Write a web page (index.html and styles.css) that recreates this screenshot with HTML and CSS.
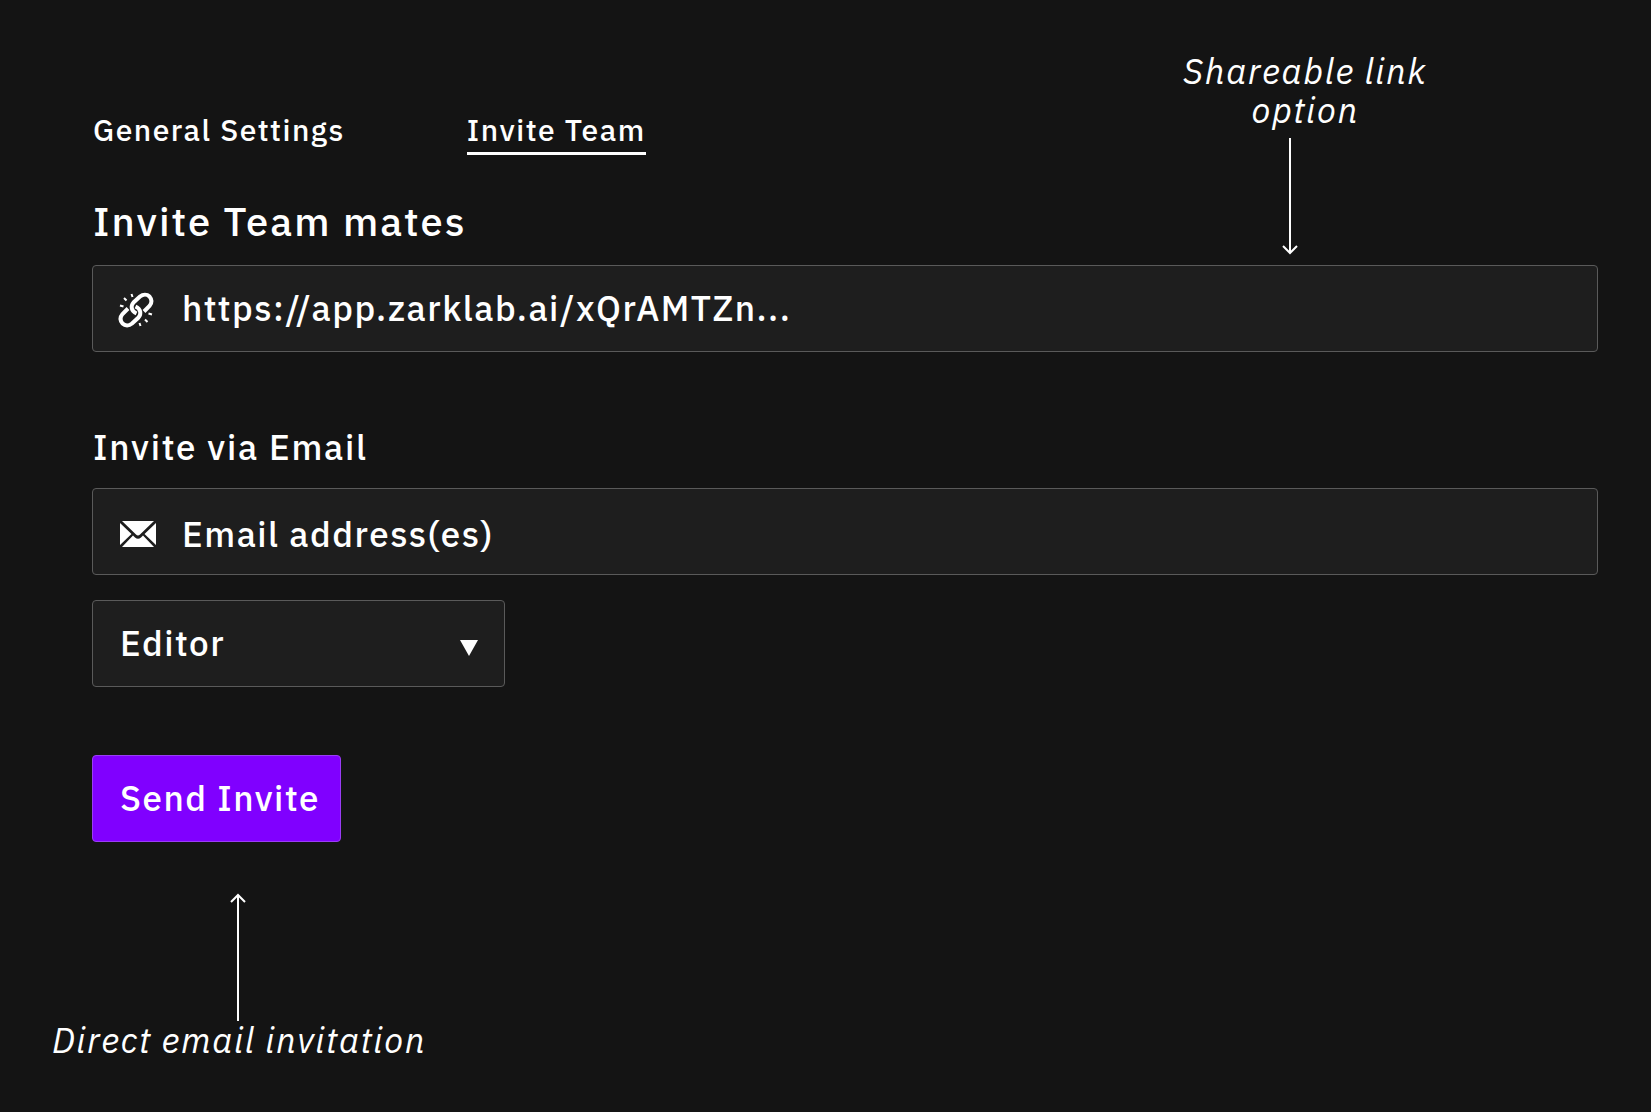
FILE: index.html
```html
<!DOCTYPE html>
<html lang="en">
<head>
<meta charset="utf-8">
<meta name="viewport" content="width=device-width, initial-scale=1">
<title>Invite Team</title>
<link rel="stylesheet" href="styles.css">
</head>
<body>
<main class="page">
  <nav class="tabs" aria-label="Settings">
    <a class="tab" href="#general">General Settings</a>
    <a class="tab tab-active" href="#invite" aria-current="page">Invite Team</a>
  </nav>

  <section class="share">
    <h1 class="title"><label for="link">Invite Team mates</label></h1>
    <div class="field">
      <svg class="icon" viewBox="0 0 36 36" aria-hidden="true">
        <g fill="none" stroke="currentColor" stroke-width="4">
          <path d="M16.500 23.500C11 21 10.500 16 13.500 12.500L20 6.500C23 4 27 4 29.500 6.500C32 9.500 32 13 29.500 16L24 21.500"/>
          <path d="M15.500 16.500C21 19 21.500 24 18.500 27.500L12 33.500C9 36 5 36 2.500 33.500C0 30.500 0 27 2.500 24L8 18.500"/>
        </g>
        <g stroke="currentColor" stroke-width="2">
          <path d="M11.500 4l1 3M4 8l2.500 2.500M0 15.500l3.500 1M28.500 23.500l3.500 1M25 29.500l2.500 2.500M19.500 33l1 3"/>
        </g>
      </svg>
      <input class="input" id="link" type="text" readonly value="https://app.zarklab.ai/xQrAMTZn...">
    </div>
    <div class="note note-link">
      <p class="note-text">Shareable link option</p>
      <svg class="arrow arrow-down" viewBox="0 0 16 118" aria-hidden="true"><path d="M8 1V115M1 109l7 7 7-7"/></svg>
    </div>
  </section>

  <form class="invite">
    <h2 class="subtitle"><label for="email">Invite via Email</label></h2>
    <div class="field field-email">
      <svg class="icon" viewBox="0 0 36 36" aria-hidden="true">
        <path fill="currentColor" d="M2 5H34L20 18.500Q18 20.500 16 18.500ZM0 7L11.500 18L0 29ZM36 7V29L24.500 18ZM2 31L13 19.500L15 21.500Q18 24 21 21.500L23 19.500L34 31Z"/>
      </svg>
      <input class="input" id="email" type="text" placeholder="Email address(es)">
    </div>
    <div class="field role">
      <select class="input" aria-label="Role">
        <option>Editor</option>
      </select>
      <svg class="caret" viewBox="0 0 18 26" aria-hidden="true"><path fill="currentColor" d="M0 10H18L9 26Z"/></svg>
    </div>
    <button class="send" type="submit">Send Invite</button>
  </form>

  <div class="note note-email">
    <svg class="arrow arrow-up" viewBox="0 0 16 128" aria-hidden="true"><path d="M8 128V3M1 9l7-7 7 7"/></svg>
    <p class="note-text">Direct email invitation</p>
  </div>
</main>
</body>
</html>
```
FILE: styles.css
```css
* {
  box-sizing: border-box;
}

body {
  margin: 0;
  background: #141414;
  color: #fff;
  font-family: "IBM Plex Sans", "Noto Sans", sans-serif;
  font-size: 30px;
  font-weight: 500;
  letter-spacing: 0.05em;
}

h1, h2, p {
  margin: 0;
}

.page {
  padding: 110px 53px 32px 92px;
}

.tabs {
  display: flex;
  gap: 122px;
  padding-left: 1px;
}

.tab {
  padding-bottom: 2px;
  border-bottom: 3px solid transparent;
  color: inherit;
  line-height: 40px;
  text-decoration: none;
}

.tab-active {
  border-color: #fff;
}

.share {
  position: relative;
  margin-top: 40px;
}

.title,
.subtitle {
  padding-left: 1px;
  font-weight: 500;
  letter-spacing: 0.05em;
}

.title {
  margin-bottom: 18px;
  font-size: 40px;
  line-height: 52px;
}

.subtitle {
  margin-bottom: 17px;
  font-size: 35px;
  line-height: 48px;
}

.field {
  display: flex;
  align-items: center;
  gap: 26px;
  height: 87px;
  padding: 0 28px 1px 27px;
  background: #1e1e1e;
  border: 1px solid #5a5a5a;
  border-radius: 4px;
}

.field-email {
  padding-top: 4px;
  padding-bottom: 0;
}

.icon {
  flex: none;
  width: 36px;
  height: 36px;
  overflow: visible;
}

.input {
  flex: 1;
  min-width: 0;
  height: 100%;
  padding: 0;
  appearance: none;
  background: none;
  border: 0;
  outline: 0;
  color: inherit;
  font: inherit;
  font-size: 35px;
  letter-spacing: inherit;
}

.input::placeholder {
  color: inherit;
  opacity: 1;
}

.invite {
  margin-top: 71px;
}

.role {
  width: 413px;
  max-width: 100%;
  margin-top: 25px;
  padding-right: 26px;
}

.caret {
  width: 18px;
  height: 26px;
  pointer-events: none;
}

.send {
  display: block;
  height: 87px;
  min-width: 248px;
  margin-top: 68px;
  padding: 0 20px 1px 27px;
  background: #8000ff;
  border: 1px solid #9a3df5;
  border-radius: 4px;
  color: inherit;
  font: inherit;
  font-size: 35px;
  letter-spacing: inherit;
  text-align: left;
}

.note {
  display: flex;
  flex-direction: column;
  width: max-content;
  font-weight: 400;
  font-style: italic;
}

.note-text {
  font-size: 35px;
  line-height: 39px;
}

.arrow {
  width: 16px;
  fill: none;
  stroke: currentColor;
  stroke-width: 2;
}

.arrow-down {
  height: 118px;
  margin: 7px 0 0 102px;
}

.arrow-up {
  height: 128px;
  margin-left: 178px;
}

.note-link {
  position: absolute;
  right: 168px;
  bottom: 97px;
  width: 250px;
  text-align: center;
}

.note-email {
  margin: 51px 0 0 -40px;
}
```
